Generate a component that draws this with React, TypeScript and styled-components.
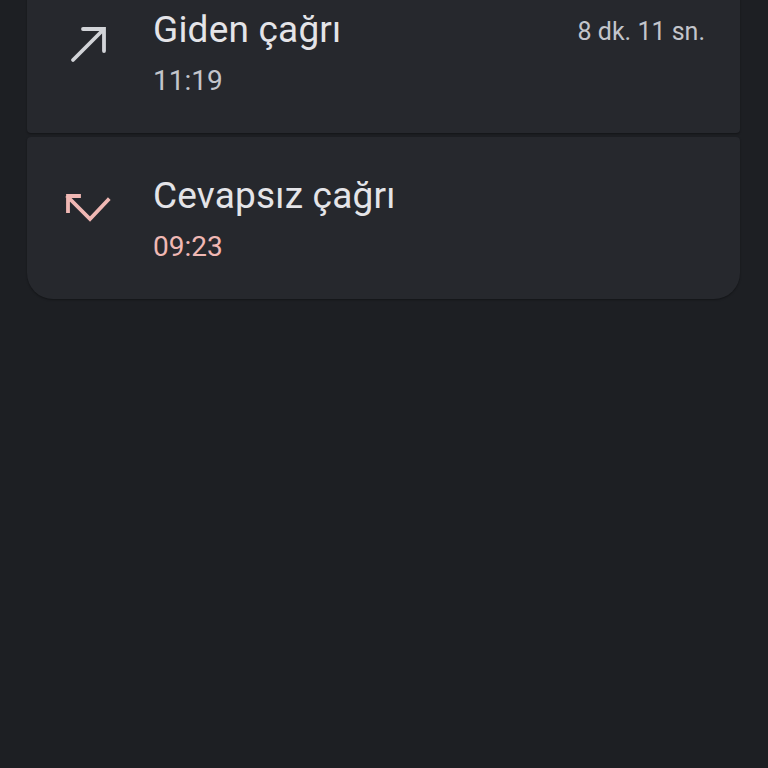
import styled, { createGlobalStyle } from "styled-components";

const Global = createGlobalStyle`
  html, body {
    margin: 0;
    padding: 0;
    background: #1d1f23;
  }
  body {
    font-family: Roboto, "Noto Sans", sans-serif;
    height: 768px;
    overflow: hidden;
  }
`;

const List = styled.div`
  display: flex;
  flex-direction: column;
  gap: 4px;
  margin: -29px 28px 0 27px;
`;

const Card = styled.div<{ $last?: boolean }>`
  display: flex;
  align-items: flex-start;
  height: 162px;
  box-sizing: border-box;
  padding: 36px 35px 0 38px;
  background: #26282d;
  border-radius: ${(p) => (p.$last ? "4px 4px 26px 26px" : "4px")};
  box-shadow: 0 1px 2px rgba(0, 0, 0, 0.35);
`;

const IconBox = styled.div`
  width: 48px;
  height: 48px;
  margin-top: 14px;
  flex-shrink: 0;
`;

const Body = styled.div`
  flex: 1;
  margin-left: 40px;
  display: flex;
  flex-direction: column;
`;

const Title = styled.div`
  font-size: 37px;
  line-height: 46px;
  color: #e4e4e8;
  letter-spacing: 0.2px;
`;

const Sub = styled.div<{ $missed?: boolean }>`
  font-size: 28px;
  line-height: 40px;
  margin-top: 8px;
  color: ${(p) => (p.$missed ? "#f0b8b4" : "#c3c5cb")};
`;

const Duration = styled.div`
  font-size: 25px;
  line-height: 46px;
  margin-top: 2px;
  color: #c3c5cb;
`;

const OutgoingIcon = () => (
  <svg width="48" height="48" viewBox="0 0 48 48">
    <path
      d="M8 39 L38 9 M18 8 H39 V30"
      fill="none"
      stroke="#d2d4d8"
      strokeWidth="3.8"
      strokeLinecap="round"
      strokeLinejoin="miter"
    />
  </svg>
);

const MissedIcon = () => (
  <svg width="48" height="48" viewBox="0 0 48 48">
    <path
      d="M3 10 L25 32 L43 13 M3 9 H14 M3 9 V24"
      fill="none"
      stroke="#f0b8b4"
      strokeWidth="3.8"
      strokeLinecap="square"
    />
  </svg>
);

const calls = [
  { title: "Giden çağrı", time: "11:19", duration: "8 dk. 11 sn.", missed: false },
  { title: "Cevapsız çağrı", time: "09:23", duration: "", missed: true },
];

const App = () => {
  return (
    <>
      <Global />
      <List>
        {calls.map((c, i) => (
          <Card key={c.title} $last={i === calls.length - 1}>
            <IconBox>{c.missed ? <MissedIcon /> : <OutgoingIcon />}</IconBox>
            <Body>
              <Title>{c.title}</Title>
              <Sub $missed={c.missed}>{c.time}</Sub>
            </Body>
            {c.duration && <Duration>{c.duration}</Duration>}
          </Card>
        ))}
      </List>
    </>
  );
};

export default App;
